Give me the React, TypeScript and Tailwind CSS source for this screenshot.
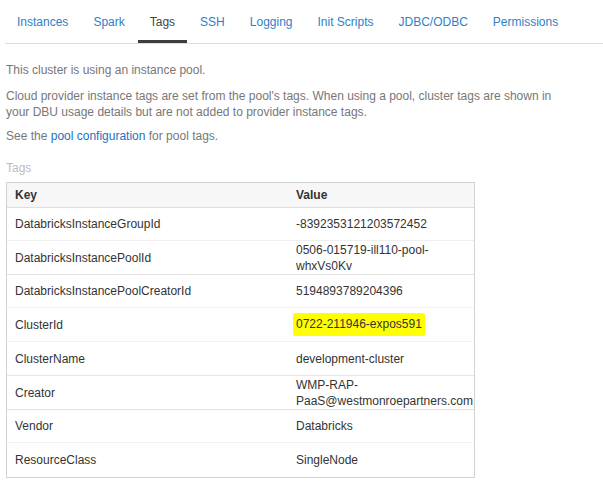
const tabs = ['Instances', 'Spark', 'Tags', 'SSH', 'Logging', 'Init Scripts', 'JDBC/ODBC', 'Permissions']

const rows: { key: string; value: string; cls: string; mark?: boolean }[] = [
    { key: 'DatabricksInstanceGroupId', value: '-8392353121203572452', cls: 'h-[33px] border-[#eeeeee]' },
    { key: 'DatabricksInstancePoolId', value: '0506-015719-ill110-pool-whxVs0Kv', cls: 'h-[34px] border-[#e3e3e3]' },
    { key: 'DatabricksInstancePoolCreatorId', value: '5194893789204396', cls: 'h-[33px] border-[#f3f3f3]' },
    { key: 'ClusterId', value: '0722-211946-expos591', cls: 'h-[34px] border-[#f3f3f3]', mark: true },
    { key: 'ClusterName', value: 'development-cluster', cls: 'h-[34px] border-[#e6e6e6]' },
    { key: 'Creator', value: 'WMP-RAP-PaaS@westmonroepartners.com', cls: 'h-[34px] border-[#e3e3e3]' },
    { key: 'Vendor', value: 'Databricks', cls: 'h-[33px] border-[#f3f3f3]' },
    { key: 'ResourceClass', value: 'SingleNode', cls: 'h-[34px] border-transparent' },
]

export default function App() {
    return (
        <div className="min-h-[491px] w-[603px] bg-white text-[12px] font-['Liberation_Sans',Arial,sans-serif]">
            <div className="ml-[5px] flex gap-[1px] border-b border-[#dddddd]">
                {tabs.map((t) => (
                    <div
                        key={t}
                        className={
                            t === 'Tags'
                                ? 'flex h-[43px] items-center border-b-[3px] border-[#3d3d3d] px-3 pt-[3px] text-[#444444]'
                                : 'flex h-[43px] items-center border-b-[3px] border-transparent px-3 pt-[3px] text-[#2f80c8]'
                        }>
                        {t}
                    </div>
                ))}
            </div>

            <div className="px-[6px] leading-4 text-[#777777]">
                <p className="mt-[18px]">This cluster is using an instance pool.</p>
                <p className="mt-[10px] w-[560px]">
                    Cloud provider instance tags are set from the pool's tags. When using a pool, cluster tags are shown in your
                    DBU usage details but are not added to provider instance tags.
                </p>
                <p className="mt-[8px]">
                    See the <span className="text-[#1f6fbf]">pool configuration</span> for pool tags.
                </p>
                <div className="mt-[16px] text-[#bdbdbd]">Tags</div>

                <div className="mt-[6px] w-[469px] border border-[#d2d2d2] text-[#333333]">
                    <div className="flex h-[25px] items-center border-b border-[#dddddd] bg-[#f7f7f7] font-bold">
                        <div className="w-[281px] pl-2">Key</div>
                        <div className="flex-1 pl-2">Value</div>
                    </div>
                    {rows.map((r) => (
                        <div key={r.key} className={`flex items-center border-b ${r.cls}`}>
                            <div className="w-[281px] pl-2">{r.key}</div>
                            <div className="w-[186px] break-words pl-2">
                                {r.mark ? (
                                    <span className="-ml-[3px] inline-block rounded-[2px] bg-[#ffff00] px-[3px] py-[4px] leading-[15px]">
                                        {r.value}
                                    </span>
                                ) : r.value === 'WMP-RAP-PaaS@westmonroepartners.com' ? (
                                    <>
                                        WMP-RAP-
                                        <br />
                                        <span className="whitespace-nowrap">PaaS@westmonroepartners.com</span>
                                    </>
                                ) : (
                                    r.value
                                )}
                            </div>
                        </div>
                    ))}
                </div>
            </div>
        </div>
    )
}
